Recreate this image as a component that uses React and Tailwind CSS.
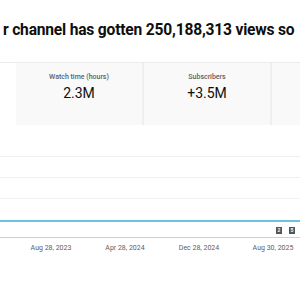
import React from 'react'

const stats = [
  { label: 'Watch time (hours)', value: '2.3M' },
  { label: 'Subscribers', value: '+3.5M' },
  { label: '', value: '' },
]

const dates = ['Aug 28, 2023', 'Apr 28, 2024', 'Dec 28, 2024', 'Aug 30, 2025']

export default function App() {
  return (
    <div className="w-[300px] h-[300px] overflow-hidden bg-white font-['Roboto',sans-serif]">
      {/* Heading */}
      <div className="h-[62px] pt-[18px] pl-[3px] whitespace-nowrap">
        <span className="text-[15.6px] leading-[20px] font-bold text-[#0f0f0f] tracking-[-0.2px]">
          r channel has gotten 250,188,313 views so
        </span>
      </div>

      {/* Stat cards */}
      <div className="border-t border-[#ececec] h-[63px] flex pl-[16px]">
        {stats.map((s, i) => (
          <div
            key={i}
            className="w-[128px] shrink-0 bg-[#f9f9f9] border-r-2 border-[#efefef] flex flex-col items-center pt-[9px]"
          >
            <div className="text-[7px] leading-[10px] font-medium text-[#606060]">{s.label}</div>
            <div className="text-[14px] leading-[18px] text-[#0f0f0f] mt-[2px]">{s.value}</div>
          </div>
        ))}
      </div>

      {/* Chart */}
      <div className="mt-[31px]">
        <div className="h-[21px] border-t border-[#efefef]" />
        <div className="h-[21px] border-t border-[#efefef]" />
        <div className="h-[22px] border-t border-[#f3f3f3]" />
        <div className="h-[2px] bg-[#6ec3dc]" />
        <div className="h-[15px] flex justify-end items-center gap-[7px] pr-[5px] pt-[1px]">
          <span className="w-[6px] h-[7px] bg-[#555] text-white text-[5px] leading-[7px] font-bold flex items-center justify-center">2</span>
          <span className="w-[6px] h-[7px] bg-[#555] text-white text-[5px] leading-[7px] font-bold flex items-center justify-center">5</span>
        </div>
        <div className="h-[1px] bg-[#cfcfcf]" />
        <div className="flex pl-[14px] pt-[5px]">
          {dates.map((d) => (
            <div key={d} className="w-[74px] shrink-0 text-center text-[7px] leading-[10px] text-[#606060]">
              {d}
            </div>
          ))}
        </div>
      </div>
    </div>
  )
}
